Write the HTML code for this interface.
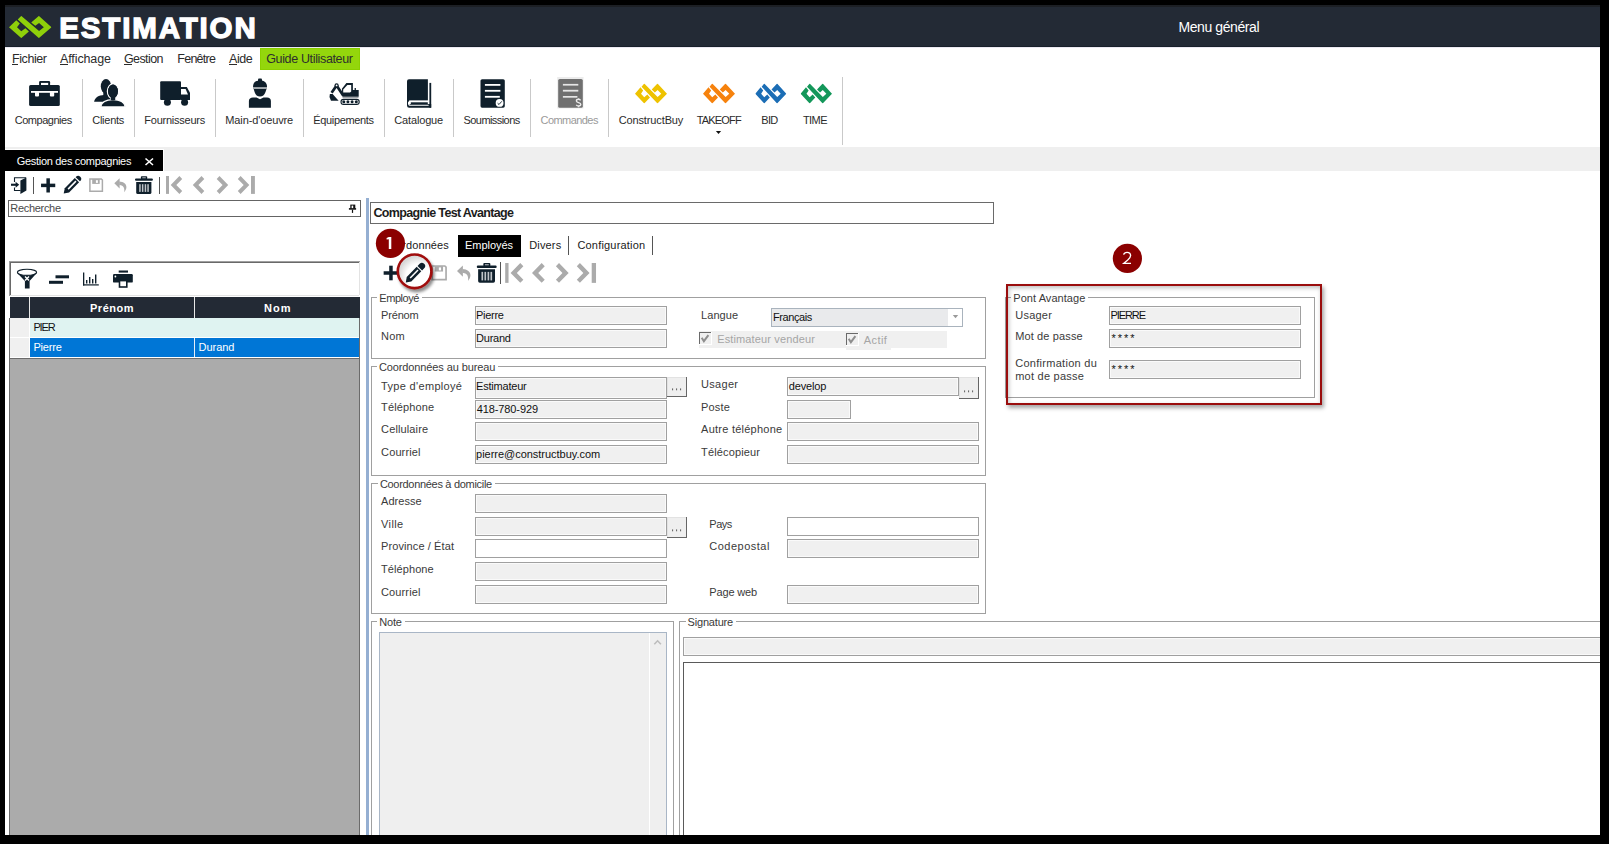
<!DOCTYPE html><html><head><meta charset="utf-8"><style>
html,body{margin:0;padding:0;}
body{width:1609px;height:844px;background:#000;position:relative;overflow:hidden;font-family:"Liberation Sans",sans-serif;}
div{position:absolute;}
.t{white-space:nowrap;}
svg{position:absolute;left:0;top:0;}
</style></head><body>
<div style="left:5px;top:5px;width:1595px;height:830px;background:#fff;"></div>
<div style="left:5px;top:5px;width:1595px;height:42px;background:#232a35;"></div>
<div style="left:5px;top:5px;width:1595px;height:2px;background:#1c1f24;"></div>
<div style="left:5px;top:46px;width:1595px;height:1px;background:#18202a;"></div>
<div style="left:5px;top:47px;width:1595px;height:1px;background:#ebe9f2;"></div>
<div class="t" style="left:59.20px;top:13.00px;font-size:29.5px;line-height:29.5px;color:#fff;font-weight:bold;letter-spacing:1.867px;-webkit-text-stroke:1.3px #fff;">ESTIMATION</div>
<div class="t" style="left:1178.50px;top:20.00px;font-size:14px;line-height:14px;color:#fff;letter-spacing:-0.418px;">Menu général</div>
<div style="left:260px;top:48px;width:100px;height:22px;background:#94d60c;box-sizing:border-box;border:1px solid #8bcf00;"></div>
<div class="t" style="left:12.00px;top:53.00px;font-size:12.5px;line-height:12.5px;color:#2b2b2b;letter-spacing:-0.417px;">Fichier</div>
<div style="left:12px;top:64px;width:6px;height:1px;background:#2b2b2b;"></div>
<div class="t" style="left:60.00px;top:53.00px;font-size:12.5px;line-height:12.5px;color:#2b2b2b;letter-spacing:-0.112px;">Affichage</div>
<div style="left:60px;top:64px;width:7.5px;height:1px;background:#2b2b2b;"></div>
<div class="t" style="left:124.00px;top:53.00px;font-size:12.5px;line-height:12.5px;color:#2b2b2b;letter-spacing:-0.600px;">Gestion</div>
<div style="left:124px;top:64px;width:7.5px;height:1px;background:#2b2b2b;"></div>
<div class="t" style="left:177.30px;top:53.00px;font-size:12.5px;line-height:12.5px;color:#2b2b2b;letter-spacing:-0.750px;">Fenêtre</div>
<div class="t" style="left:229.00px;top:53.00px;font-size:12.5px;line-height:12.5px;color:#2b2b2b;letter-spacing:-0.400px;">Aide</div>
<div style="left:229px;top:64px;width:7.5px;height:1px;background:#2b2b2b;"></div>
<div class="t" style="left:266.20px;top:53.00px;font-size:12.5px;line-height:12.5px;color:#2e2e2e;letter-spacing:-0.350px;">Guide Utilisateur</div>
<div style="left:82px;top:79px;width:1px;height:58px;background:#c9c9c9;"></div>
<div style="left:134px;top:79px;width:1px;height:58px;background:#c9c9c9;"></div>
<div style="left:215px;top:79px;width:1px;height:58px;background:#c9c9c9;"></div>
<div style="left:303px;top:79px;width:1px;height:58px;background:#c9c9c9;"></div>
<div style="left:384px;top:79px;width:1px;height:58px;background:#c9c9c9;"></div>
<div style="left:453px;top:79px;width:1px;height:58px;background:#c9c9c9;"></div>
<div style="left:530px;top:79px;width:1px;height:58px;background:#c9c9c9;"></div>
<div style="left:608px;top:79px;width:1px;height:58px;background:#c9c9c9;"></div>
<div style="left:842px;top:77px;width:1px;height:68px;background:#c9c9c9;"></div>
<div class="t" style="left:14.70px;top:115.00px;font-size:11px;line-height:11px;color:#2b2b2b;letter-spacing:-0.472px;">Compagnies</div>
<div class="t" style="left:92.20px;top:115.00px;font-size:11px;line-height:11px;color:#2b2b2b;letter-spacing:-0.250px;">Clients</div>
<div class="t" style="left:144.30px;top:115.00px;font-size:11px;line-height:11px;color:#2b2b2b;letter-spacing:-0.245px;">Fournisseurs</div>
<div class="t" style="left:225.30px;top:115.00px;font-size:11px;line-height:11px;color:#2b2b2b;letter-spacing:-0.121px;">Main-d'oeuvre</div>
<div class="t" style="left:313.20px;top:115.00px;font-size:11px;line-height:11px;color:#2b2b2b;letter-spacing:-0.330px;">Équipements</div>
<div class="t" style="left:394.30px;top:115.00px;font-size:11px;line-height:11px;color:#2b2b2b;letter-spacing:-0.156px;">Catalogue</div>
<div class="t" style="left:463.50px;top:115.00px;font-size:11px;line-height:11px;color:#2b2b2b;letter-spacing:-0.565px;">Soumissions</div>
<div class="t" style="left:540.50px;top:115.00px;font-size:11px;line-height:11px;color:#9a9a9a;letter-spacing:-0.556px;">Commandes</div>
<div class="t" style="left:618.70px;top:115.00px;font-size:11px;line-height:11px;color:#2b2b2b;letter-spacing:-0.123px;">ConstructBuy</div>
<div class="t" style="left:696.80px;top:115.00px;font-size:11px;line-height:11px;color:#2b2b2b;letter-spacing:-0.850px;">TAKEOFF</div>
<div class="t" style="left:761.30px;top:115.00px;font-size:11px;line-height:11px;color:#2b2b2b;letter-spacing:-0.675px;">BID</div>
<div class="t" style="left:803.00px;top:115.00px;font-size:11px;line-height:11px;color:#2b2b2b;letter-spacing:-0.600px;">TIME</div>
<div style="left:5px;top:147px;width:1595px;height:24px;background:#efefef;"></div>
<div style="left:5px;top:149px;width:159px;height:22px;background:#fff;"></div>
<div style="left:5px;top:150px;width:158px;height:21px;background:#000;"></div>
<div class="t" style="left:16.80px;top:156.00px;font-size:11px;line-height:11px;color:#fff;letter-spacing:-0.307px;">Gestion des compagnies</div>
<div style="left:33px;top:177px;width:1px;height:17px;background:#555;"></div>
<div style="left:159px;top:177px;width:1px;height:17px;background:#555;"></div>
<div style="left:8px;top:200px;width:353px;height:17px;box-sizing:border-box;border:1px solid #646464;background:#fff;"></div>
<div class="t" style="left:10.30px;top:203.00px;font-size:11px;line-height:11px;color:#4a4a4a;letter-spacing:-0.312px;">Recherche</div>
<div style="left:9px;top:261px;width:351px;height:35px;background:#fff;border-top:1px solid #a0a0a0;border-left:1px solid #a0a0a0;box-sizing:border-box;"></div>
<div style="left:10px;top:262px;width:349px;height:1px;background:#696969;"></div>
<div style="left:10px;top:262px;width:1px;height:33px;background:#696969;"></div>
<div style="left:358.5px;top:262px;width:1px;height:33px;background:#e3e3e3;"></div>
<div style="left:10px;top:295px;width:349px;height:1px;background:#e3e3e3;"></div>
<div style="left:10px;top:297px;width:350px;height:21px;background:#232a35;"></div>
<div style="left:29px;top:297px;width:1px;height:21px;background:#e8e8e8;"></div>
<div style="left:194px;top:297px;width:1px;height:21px;background:#e8e8e8;"></div>
<div class="t" style="left:90.00px;top:303.00px;font-size:11px;line-height:11px;color:#fff;font-weight:bold;letter-spacing:0.530px;">Prénom</div>
<div class="t" style="left:264.00px;top:303.00px;font-size:11px;line-height:11px;color:#fff;font-weight:bold;letter-spacing:1.075px;">Nom</div>
<div style="left:10px;top:318px;width:19px;height:39px;background:#f0f0f0;"></div>
<div style="left:10px;top:337px;width:19px;height:1px;background:#fff;"></div>
<div style="left:30px;top:318px;width:329px;height:19px;background:#dff3f1;"></div>
<div style="left:30px;top:338px;width:329px;height:19px;background:#0076d6;"></div>
<div style="left:194px;top:338px;width:1px;height:19px;background:#e6eef8;"></div>
<div style="left:30px;top:357px;width:329px;height:1px;background:#fff;"></div>
<div class="t" style="left:33.40px;top:322.00px;font-size:11px;line-height:11px;color:#111;letter-spacing:-1.117px;">PIER</div>
<div class="t" style="left:33.40px;top:342.00px;font-size:11px;line-height:11px;color:#fff;letter-spacing:-0.190px;">Pierre</div>
<div class="t" style="left:198.50px;top:342.00px;font-size:11px;line-height:11px;color:#fff;letter-spacing:-0.020px;">Durand</div>
<div style="left:10px;top:358px;width:350px;height:477px;background:#ababab;"></div>
<div style="left:9px;top:318px;width:1px;height:517px;background:#6b6b6b;"></div>
<div style="left:359px;top:318px;width:1px;height:517px;background:#6b6b6b;"></div>
<div style="left:10px;top:358px;width:349px;height:1px;background:#6b6b6b;"></div>
<div style="left:366px;top:198px;width:3px;height:637px;background:#95afd2;"></div>
<div style="left:370px;top:202px;width:624px;height:22px;box-sizing:border-box;border:1px solid #6a6a6a;background:#fff;"></div>
<div class="t" style="left:373.40px;top:207.00px;font-size:12.5px;line-height:12.5px;color:#1c1c1c;font-weight:bold;letter-spacing:-0.659px;">Compagnie Test Avantage</div>
<div class="t" style="left:381.80px;top:240.00px;font-size:11px;line-height:11px;color:#1a1a1a;letter-spacing:0.095px;">Coordonnées</div>
<div style="left:458px;top:235px;width:63px;height:22px;background:#000;"></div>
<div class="t" style="left:465.00px;top:240.00px;font-size:11px;line-height:11px;color:#fff;letter-spacing:-0.029px;">Employés</div>
<div class="t" style="left:529.20px;top:240.00px;font-size:11px;line-height:11px;color:#1a1a1a;letter-spacing:0.170px;">Divers</div>
<div style="left:568px;top:236px;width:1px;height:18.6px;background:#555;"></div>
<div class="t" style="left:577.40px;top:240.00px;font-size:11px;line-height:11px;color:#1a1a1a;letter-spacing:0.196px;">Configuration</div>
<div style="left:652px;top:236px;width:1px;height:18.6px;background:#555;"></div>
<div style="left:500px;top:262px;width:1px;height:22px;background:#555;"></div>
<div style="left:371px;top:297px;width:1px;height:62px;background:#a0a0a0;"></div>
<div style="left:985px;top:297px;width:1px;height:62px;background:#a0a0a0;"></div>
<div style="left:371px;top:358px;width:615px;height:1px;background:#a0a0a0;"></div>
<div style="left:371px;top:297px;width:6.300000000000011px;height:1px;background:#a0a0a0;"></div>
<div style="left:422.40000000000003px;top:297px;width:563.5999999999999px;height:1px;background:#a0a0a0;"></div>
<div class="t" style="left:379.30px;top:293.00px;font-size:11px;line-height:11px;color:#3a3a3a;letter-spacing:-0.450px;">Employé</div>
<div class="t" style="left:381.10px;top:310.00px;font-size:11px;line-height:11px;color:#3a3a3a;letter-spacing:-0.180px;">Prénom</div>
<div class="t" style="left:381.10px;top:331.00px;font-size:11px;line-height:11px;color:#3a3a3a;letter-spacing:0.125px;">Nom</div>
<div style="left:475px;top:306px;width:192px;height:19px;box-sizing:border-box;border:1px solid #a0a0a0;background:#f0f0f0;box-shadow:inset 0 0 0 1px #fafafa;"></div>
<div class="t" style="left:476.10px;top:310.00px;font-size:11px;line-height:11px;color:#101010;letter-spacing:-0.310px;">Pierre</div>
<div style="left:475px;top:329px;width:192px;height:19px;box-sizing:border-box;border:1px solid #a0a0a0;background:#f0f0f0;box-shadow:inset 0 0 0 1px #fafafa;"></div>
<div class="t" style="left:476.10px;top:333.00px;font-size:11px;line-height:11px;color:#101010;letter-spacing:-0.240px;">Durand</div>
<div class="t" style="left:701.10px;top:310.00px;font-size:11px;line-height:11px;color:#3a3a3a;letter-spacing:0.040px;">Langue</div>
<div style="left:771px;top:308px;width:192px;height:19px;box-sizing:border-box;border:1px solid #a9b3bd;background:#e9eaec;"></div>
<div style="left:948px;top:309px;width:14px;height:17px;background:#fff;"></div>
<div class="t" style="left:773.00px;top:312.00px;font-size:11px;line-height:11px;color:#101010;letter-spacing:-0.414px;">Français</div>
<div style="left:699px;top:331px;width:248px;height:17px;background:#f0f0f0;"></div>
<div style="left:846px;top:348px;width:45px;height:1.5px;background:#f0f0f0;"></div>
<div style="left:699px;top:332px;width:12.5px;height:12.5px;background:#fff;"></div>
<div style="left:699px;top:332px;width:11.5px;height:11.5px;background:#f0f0f0;box-sizing:border-box;border-top:1.5px solid #6a6a6a;border-left:1.5px solid #6a6a6a;"></div>
<div class="t" style="left:717.20px;top:334.00px;font-size:11px;line-height:11px;color:#a5a5a5;letter-spacing:0.135px;">Estimateur vendeur</div>
<div style="left:846px;top:333px;width:12.5px;height:12.5px;background:#fff;"></div>
<div style="left:846px;top:333px;width:11.5px;height:11.5px;background:#f0f0f0;box-sizing:border-box;border-top:1.5px solid #6a6a6a;border-left:1.5px solid #6a6a6a;"></div>
<div class="t" style="left:863.70px;top:335.00px;font-size:11px;line-height:11px;color:#a5a5a5;letter-spacing:0.438px;">Actif</div>
<div style="left:371px;top:366px;width:1px;height:110px;background:#a0a0a0;"></div>
<div style="left:985px;top:366px;width:1px;height:110px;background:#a0a0a0;"></div>
<div style="left:371px;top:475px;width:615px;height:1px;background:#a0a0a0;"></div>
<div style="left:371px;top:366px;width:6px;height:1px;background:#a0a0a0;"></div>
<div style="left:498.3px;top:366px;width:487.7px;height:1px;background:#a0a0a0;"></div>
<div class="t" style="left:379.00px;top:362.00px;font-size:11px;line-height:11px;color:#3a3a3a;letter-spacing:-0.118px;">Coordonnées au bureau</div>
<div class="t" style="left:381.10px;top:381.00px;font-size:11px;line-height:11px;color:#3a3a3a;letter-spacing:0.323px;">Type d'employé</div>
<div style="left:475px;top:377px;width:192px;height:22px;box-sizing:border-box;border:1px solid #a0a0a0;background:#f0f0f0;box-shadow:inset 0 0 0 1px #fafafa;"></div>
<div class="t" style="left:381.10px;top:402.00px;font-size:11px;line-height:11px;color:#3a3a3a;letter-spacing:0.125px;">Téléphone</div>
<div style="left:475px;top:400px;width:192px;height:19px;box-sizing:border-box;border:1px solid #a0a0a0;background:#f0f0f0;box-shadow:inset 0 0 0 1px #fafafa;"></div>
<div class="t" style="left:381.10px;top:424.00px;font-size:11px;line-height:11px;color:#3a3a3a;letter-spacing:0.128px;">Cellulaire</div>
<div style="left:475px;top:422px;width:192px;height:19px;box-sizing:border-box;border:1px solid #a0a0a0;background:#f0f0f0;box-shadow:inset 0 0 0 1px #fafafa;"></div>
<div class="t" style="left:381.10px;top:447.00px;font-size:11px;line-height:11px;color:#3a3a3a;letter-spacing:0.114px;">Courriel</div>
<div style="left:475px;top:445px;width:192px;height:19px;box-sizing:border-box;border:1px solid #a0a0a0;background:#f0f0f0;box-shadow:inset 0 0 0 1px #fafafa;"></div>
<div style="left:667px;top:377px;width:20px;height:20px;background:#efefef;box-sizing:border-box;border-right:1.4px solid #666;border-bottom:1.4px solid #666;"></div>
<div style="left:667px;top:377px;width:18.6px;height:1px;background:#e2e2e2;"></div>
<div style="left:667px;top:377px;width:1px;height:18.6px;background:#e2e2e2;"></div>
<div class="t" style="left:476.10px;top:381.00px;font-size:11px;line-height:11px;color:#101010;letter-spacing:-0.217px;">Estimateur</div>
<div class="t" style="left:476.70px;top:404.00px;font-size:11px;line-height:11px;color:#101010;letter-spacing:-0.100px;">418-780-929</div>
<div class="t" style="left:476.10px;top:449.00px;font-size:11px;line-height:11px;color:#101010;letter-spacing:-0.027px;">pierre@constructbuy.com</div>
<div class="t" style="left:701.10px;top:379.00px;font-size:11px;line-height:11px;color:#3a3a3a;letter-spacing:0.290px;">Usager</div>
<div class="t" style="left:701.10px;top:402.00px;font-size:11px;line-height:11px;color:#3a3a3a;letter-spacing:0.163px;">Poste</div>
<div class="t" style="left:701.10px;top:424.00px;font-size:11px;line-height:11px;color:#3a3a3a;letter-spacing:0.239px;">Autre téléphone</div>
<div class="t" style="left:701.10px;top:447.00px;font-size:11px;line-height:11px;color:#3a3a3a;letter-spacing:0.140px;">Télécopieur</div>
<div style="left:787px;top:377px;width:172px;height:19px;box-sizing:border-box;border:1px solid #a0a0a0;background:#f0f0f0;box-shadow:inset 0 0 0 1px #fafafa;"></div>
<div style="left:959px;top:377px;width:20px;height:22px;background:#efefef;box-sizing:border-box;border-right:1.4px solid #666;border-bottom:1.4px solid #666;"></div>
<div style="left:959px;top:377px;width:18.6px;height:1px;background:#e2e2e2;"></div>
<div style="left:959px;top:377px;width:1px;height:20.6px;background:#e2e2e2;"></div>
<div class="t" style="left:788.70px;top:381.00px;font-size:11px;line-height:11px;color:#101010;letter-spacing:-0.142px;">develop</div>
<div style="left:787px;top:400px;width:64px;height:19px;box-sizing:border-box;border:1px solid #a0a0a0;background:#f0f0f0;box-shadow:inset 0 0 0 1px #fafafa;"></div>
<div style="left:787px;top:422px;width:192px;height:19px;box-sizing:border-box;border:1px solid #a0a0a0;background:#f0f0f0;box-shadow:inset 0 0 0 1px #fafafa;"></div>
<div style="left:787px;top:445px;width:192px;height:19px;box-sizing:border-box;border:1px solid #a0a0a0;background:#f0f0f0;box-shadow:inset 0 0 0 1px #fafafa;"></div>
<div style="left:371px;top:483px;width:1px;height:131px;background:#a0a0a0;"></div>
<div style="left:985px;top:483px;width:1px;height:131px;background:#a0a0a0;"></div>
<div style="left:371px;top:613px;width:615px;height:1px;background:#a0a0a0;"></div>
<div style="left:371px;top:483px;width:6.899999999999977px;height:1px;background:#a0a0a0;"></div>
<div style="left:495.2px;top:483px;width:490.8px;height:1px;background:#a0a0a0;"></div>
<div class="t" style="left:379.90px;top:479.00px;font-size:11px;line-height:11px;color:#3a3a3a;letter-spacing:-0.302px;">Coordonnées à domicile</div>
<div class="t" style="left:381.00px;top:496.00px;font-size:11px;line-height:11px;color:#3a3a3a;letter-spacing:0.058px;">Adresse</div>
<div style="left:475px;top:494px;width:192px;height:19px;box-sizing:border-box;border:1px solid #a0a0a0;background:#f0f0f0;box-shadow:inset 0 0 0 1px #fafafa;"></div>
<div class="t" style="left:381.00px;top:519.00px;font-size:11px;line-height:11px;color:#3a3a3a;letter-spacing:0.400px;">Ville</div>
<div style="left:475px;top:517px;width:192px;height:19px;box-sizing:border-box;border:1px solid #a0a0a0;background:#f0f0f0;box-shadow:inset 0 0 0 1px #fafafa;"></div>
<div class="t" style="left:381.00px;top:541.00px;font-size:11px;line-height:11px;color:#3a3a3a;letter-spacing:0.104px;">Province / État</div>
<div style="left:475px;top:539px;width:192px;height:19px;box-sizing:border-box;border:1px solid #a0a0a0;background:#fff;"></div>
<div class="t" style="left:381.00px;top:564.00px;font-size:11px;line-height:11px;color:#3a3a3a;letter-spacing:0.088px;">Téléphone</div>
<div style="left:475px;top:562px;width:192px;height:19px;box-sizing:border-box;border:1px solid #a0a0a0;background:#f0f0f0;box-shadow:inset 0 0 0 1px #fafafa;"></div>
<div class="t" style="left:381.00px;top:587.00px;font-size:11px;line-height:11px;color:#3a3a3a;letter-spacing:0.129px;">Courriel</div>
<div style="left:475px;top:585px;width:192px;height:19px;box-sizing:border-box;border:1px solid #a0a0a0;background:#f0f0f0;box-shadow:inset 0 0 0 1px #fafafa;"></div>
<div style="left:667px;top:517px;width:20px;height:21px;background:#efefef;box-sizing:border-box;border-right:1.4px solid #666;border-bottom:1.4px solid #666;"></div>
<div style="left:667px;top:517px;width:18.6px;height:1px;background:#e2e2e2;"></div>
<div style="left:667px;top:517px;width:1px;height:19.6px;background:#e2e2e2;"></div>
<div class="t" style="left:709.30px;top:519.00px;font-size:11px;line-height:11px;color:#3a3a3a;letter-spacing:-0.483px;">Pays</div>
<div style="left:787px;top:517px;width:192px;height:19px;box-sizing:border-box;border:1px solid #a0a0a0;background:#fff;"></div>
<div class="t" style="left:709.30px;top:541.00px;font-size:11px;line-height:11px;color:#3a3a3a;letter-spacing:0.494px;">Codepostal</div>
<div style="left:787px;top:539px;width:192px;height:19px;box-sizing:border-box;border:1px solid #a0a0a0;background:#f0f0f0;box-shadow:inset 0 0 0 1px #fafafa;"></div>
<div class="t" style="left:709.30px;top:587.00px;font-size:11px;line-height:11px;color:#3a3a3a;letter-spacing:-0.164px;">Page web</div>
<div style="left:787px;top:585px;width:192px;height:19px;box-sizing:border-box;border:1px solid #a0a0a0;background:#f0f0f0;box-shadow:inset 0 0 0 1px #fafafa;"></div>
<div style="left:371px;top:621px;width:1px;height:220px;background:#a0a0a0;"></div>
<div style="left:673px;top:621px;width:1px;height:220px;background:#a0a0a0;"></div>
<div style="left:371px;top:840px;width:303px;height:1px;background:#a0a0a0;"></div>
<div style="left:371px;top:621px;width:6.300000000000011px;height:1px;background:#a0a0a0;"></div>
<div style="left:405.0px;top:621px;width:269.0px;height:1px;background:#a0a0a0;"></div>
<div class="t" style="left:379.30px;top:617.00px;font-size:11px;line-height:11px;color:#3a3a3a;letter-spacing:-0.183px;">Note</div>
<div style="left:379px;top:632px;width:288px;height:210px;box-sizing:border-box;border:1px solid #a9b6c6;background:#efefef;"></div>
<div style="left:649px;top:633px;width:1px;height:205px;background:#fff;"></div>
<div style="left:679px;top:621px;width:1px;height:220px;background:#a0a0a0;"></div>
<div style="left:1608px;top:621px;width:1px;height:220px;background:#a0a0a0;"></div>
<div style="left:679px;top:840px;width:930px;height:1px;background:#a0a0a0;"></div>
<div style="left:679px;top:621px;width:6.600000000000023px;height:1px;background:#a0a0a0;"></div>
<div style="left:736.2px;top:621px;width:872.8px;height:1px;background:#a0a0a0;"></div>
<div class="t" style="left:687.60px;top:617.00px;font-size:11px;line-height:11px;color:#3a3a3a;letter-spacing:-0.188px;">Signature</div>
<div style="left:683px;top:637px;width:930px;height:19px;box-sizing:border-box;border:1px solid #a0a0a0;background:#f0f0f0;box-shadow:inset 0 0 0 1px #fafafa;"></div>
<div style="left:683px;top:662px;width:930px;height:200px;box-sizing:border-box;border:1px solid #5a5a5a;background:#fff;"></div>
<div style="left:1005px;top:297px;width:1px;height:101px;background:#a0a0a0;"></div>
<div style="left:1314px;top:297px;width:1px;height:101px;background:#a0a0a0;"></div>
<div style="left:1005px;top:397px;width:310px;height:1px;background:#a0a0a0;"></div>
<div style="left:1005px;top:297px;width:6.2999999999999545px;height:1px;background:#a0a0a0;"></div>
<div style="left:1088.3px;top:297px;width:226.70000000000005px;height:1px;background:#a0a0a0;"></div>
<div class="t" style="left:1013.30px;top:293.00px;font-size:11px;line-height:11px;color:#3a3a3a;letter-spacing:0.054px;">Pont Avantage</div>
<div class="t" style="left:1015.20px;top:310.00px;font-size:11px;line-height:11px;color:#3a3a3a;letter-spacing:0.250px;">Usager</div>
<div class="t" style="left:1015.20px;top:331.00px;font-size:11px;line-height:11px;color:#3a3a3a;letter-spacing:0.132px;">Mot de passe</div>
<div class="t" style="left:1015.20px;top:358.00px;font-size:11px;line-height:11px;color:#3a3a3a;letter-spacing:0.289px;">Confirmation du</div>
<div class="t" style="left:1015.20px;top:371.00px;font-size:11px;line-height:11px;color:#3a3a3a;letter-spacing:0.250px;">mot de passe</div>
<div style="left:1109px;top:306px;width:192px;height:19px;box-sizing:border-box;border:1px solid #a0a0a0;background:#f0f0f0;box-shadow:inset 0 0 0 1px #fafafa;"></div>
<div class="t" style="left:1110.40px;top:310.00px;font-size:11px;line-height:11px;color:#101010;letter-spacing:-1.070px;">PIERRE</div>
<div style="left:1109px;top:329px;width:192px;height:19px;box-sizing:border-box;border:1px solid #a0a0a0;background:#f0f0f0;box-shadow:inset 0 0 0 1px #fafafa;"></div>
<div class="t" style="left:1111.50px;top:333.00px;font-size:11px;line-height:11px;color:#101010;letter-spacing:1.967px;">****</div>
<div style="left:1109px;top:360px;width:192px;height:19px;box-sizing:border-box;border:1px solid #a0a0a0;background:#f0f0f0;box-shadow:inset 0 0 0 1px #fafafa;"></div>
<div class="t" style="left:1111.50px;top:364.00px;font-size:11px;line-height:11px;color:#101010;letter-spacing:1.967px;">****</div>
<div style="left:1006px;top:284px;width:316px;height:121px;background:transparent;box-sizing:border-box;border:2.2px solid #9a0d0d;box-shadow:2px 3px 4px rgba(0,0,0,0.35), inset 1px 2px 4px rgba(0,0,0,0.25);"></div>
<div style="left:1600px;top:0px;width:9px;height:844px;background:#000;"></div>
<div style="left:0px;top:835px;width:1609px;height:9px;background:#000;"></div>
<div style="left:0px;top:0px;width:5px;height:844px;background:#000;"></div>
<div style="left:0px;top:0px;width:1609px;height:5px;background:#000;"></div>
<svg width="1609" height="844" viewBox="0 0 1609 844" style="position:absolute;left:0;top:0"><svg x="9" y="15.9" width="42.5" height="22.200000000000003" viewBox="85 110 1195 625" preserveAspectRatio="none"><polygon points="290,230 85,430 430,735 645,550 545,455 430,540 310,430 390,325" fill="#8fd00a"/><polygon points="330,210 430,110 930,535 1065,430 930,310 825,390 710,295 925,110 1280,430 925,735" fill="#8fd00a"/></svg>
<polygon points="715.9,131 721.1,131 718.5,134" fill="#111"/>
<path d="M145.5,158.5 L153,165 M153,158.5 L145.5,165" stroke="#fff" stroke-width="1.6"/>
<g transform="translate(0,0)"><path d="M14.5,182 V177.7 H26 M14.5,187.5 V190.5 H20.5" fill="none" stroke="#0f1f2b" stroke-width="1.1"/><polygon points="20.4,180.4 26.4,177.4 26.4,190.4 20.4,193.9" fill="#0f1f2b"/><rect x="11" y="183.7" width="5.5" height="2.1" fill="#0f1f2b"/><polygon points="15.6,181.8 19.2,184.75 15.6,187.7" fill="#0f1f2b"/></g>
<rect x="46.4" y="178.3" width="3.5" height="14.2" fill="#0f1f2b"/><rect x="41.05" y="183.65" width="14.2" height="3.5" fill="#0f1f2b"/>
<g transform="translate(63.7,193.6) rotate(-45.5)"><polygon points="0,0 4.6,-3.0 18.9,-3.0 18.9,3.0 4.6,3.0" fill="#0f1f2b"/><rect x="6.3" y="-0.75" width="11.2" height="1.5" fill="#fff"/><path d="M20.1,-3.0 H20.6 A3.0,3.0 0 0 1 20.6,3.0 H20.1 Z" fill="#0f1f2b"/></g>
<g transform="translate(0.0,0.0)"><path d="M89.9,178.9 H101.3 L102.4,180 V191.2 H89.9 Z" fill="none" stroke="#ababab" stroke-width="1.5"/><rect x="92.2" y="179" width="7.5" height="4.9" fill="#ababab"/><rect x="95.9" y="180.2" width="2" height="2.7" fill="#fff"/></g>
<g transform="translate(0.0,0.0)"><polygon points="114.3,183.2 119.6,178.2 119.6,188.4" fill="#ababab"/><path d="M119.2,181.5 C123.5,181.6 126.8,184 126.4,187.6 C126.2,189.6 125.2,191 124.2,192.2 C124.6,190 124.3,187.2 122.6,186 C121.6,185.3 120.5,185.1 119.2,185 Z" fill="#ababab"/></g>
<g transform="translate(0,0.0)"><rect x="140.9" y="176.2" width="6.3" height="3" rx="0.8" fill="#0f1f2b"/><rect x="142.3" y="177.3" width="3.5" height="1.2" fill="#b8bcc0"/><rect x="135" y="178.5" width="17.9" height="2.3" rx="1" fill="#0f1f2b"/><path d="M136.2,181.9 H151.4 V192.4 A1.5,1.5 0 0 1 149.9,193.9 H137.7 A1.5,1.5 0 0 1 136.2,192.4 Z" fill="#0f1f2b"/><rect x="139.2" y="184.2" width="1.5" height="7.7" fill="#c0c4c8"/><rect x="141.9" y="184.2" width="1.5" height="7.7" fill="#c0c4c8"/><rect x="144.7" y="184.2" width="1.5" height="7.7" fill="#c0c4c8"/><rect x="147.3" y="184.2" width="1.5" height="7.7" fill="#c0c4c8"/></g>
<rect x="166" y="176" width="3.00" height="17.90" fill="#ababab"/>
<polygon points="170.70,185.00 179.40,176.00 182.20,178.90 176.30,185.00 182.20,191.10 179.40,193.90" fill="#ababab"/>
<polygon points="192.80,185.00 201.50,176.00 204.30,178.90 198.40,185.00 204.30,191.10 201.50,193.90" fill="#ababab"/>
<polygon points="228.20,185.00 219.50,176.00 216.70,178.90 222.60,185.00 216.70,191.10 219.50,193.90" fill="#ababab"/>
<polygon points="249.30,185.00 240.60,176.00 237.80,178.90 243.70,185.00 237.80,191.10 240.60,193.90" fill="#ababab"/>
<rect x="251" y="176" width="3.90" height="17.90" fill="#ababab"/>
<g fill="#0f1f2b"><rect x="39.1" y="81" width="11" height="5" rx="1.2"/><rect x="29.1" y="85" width="30.7" height="20.9" rx="1.5"/></g><rect x="41" y="82.9" width="7.2" height="2.1" fill="#fff"/><rect x="31" y="91" width="27" height="1.8" fill="#fff"/><rect x="35" y="91" width="4" height="5.4" rx="1" fill="#fff"/><rect x="49.9" y="91" width="4.3" height="5.4" rx="1" fill="#fff"/>
<g fill="#0f1f2b"><ellipse cx="106" cy="86.3" rx="5.2" ry="7.2"/><rect x="103.3" y="91" width="4.5" height="5"/><path d="M94.1,101.7 C94.8,97.5 98.8,95.2 104,95 L110,95 L111,101.7 Z"/></g><g fill="#0f1f2b" stroke="#fff" stroke-width="1.3"><ellipse cx="113" cy="91.3" rx="5.6" ry="7.4"/><path d="M100.6,107 C101.5,102 106,99.7 113,99.7 C120,99.7 124.5,102 125.4,107 Z"/></g><ellipse cx="113" cy="91.3" rx="4.95" ry="6.75" fill="#0f1f2b"/><rect x="110.8" y="97" width="4.4" height="3.2" fill="#0f1f2b"/>
<g fill="#0f1f2b"><rect x="160.2" y="81.2" width="20.8" height="18.7" rx="1"/><path d="M180.5,87 H186.8 L190,92.8 V99.9 H180.5 Z"/><circle cx="167.4" cy="102.2" r="3.5"/><circle cx="184.6" cy="102.2" r="3.5"/></g><polygon points="181,88.9 185.6,88.9 188,94.5 181,94.5" fill="#fff"/>
<g fill="#0f1f2b"><rect x="258" y="78.5" width="4" height="3.5" rx="1"/><path d="M253,87 C253,82 256,80.5 260,80.5 C264,80.5 267,82 267,87 Z"/><path d="M253.7,89 H266.5 L265.5,92 C264.5,95 262.5,96.6 260,96.6 C257.5,96.6 255.5,95 254.6,92 Z"/><path d="M248.9,107.7 V101 C248.9,98.8 250.5,97.4 253,97.4 H256.5 L260,99.2 L263.5,97.4 H267 C269.5,97.4 270.9,98.8 270.9,101 V107.7 Z"/></g><rect x="253" y="87" width="14" height="1.9" fill="#9aa0a5"/>
<g fill="#0f1f2b"><polygon points="341.9,88.8 346.4,83.1 352.9,83.1 352.9,90.1 358.7,90.1 358.7,96.8 342.4,96.8"/><rect x="354.6" y="88" width="1.3" height="2.2"/><polygon points="329.9,93.9 332.6,93.9 338.6,100.7 331,100.7 329.5,97"/></g><polygon points="343.2,89.4 347.4,85 351.2,85 351.2,91.6 350,92.6 343.2,92.6" fill="#fff"/><path d="M343.2,95.5 L336.6,85.4 L331.6,92.8" fill="none" stroke="#0f1f2b" stroke-width="2.7" stroke-linejoin="round"/><circle cx="336.6" cy="85.4" r="2.1" fill="#0f1f2b"/><circle cx="336.6" cy="85.4" r="0.9" fill="#fff"/><rect x="342.5" y="97.2" width="16" height="0.9" fill="#8a9096"/><rect x="341" y="99.4" width="18.2" height="5" rx="2.5" fill="none" stroke="#0f1f2b" stroke-width="1.1"/><g fill="#0f1f2b"><circle cx="343.8" cy="101.8" r="1.5"/><circle cx="347.9" cy="101.8" r="1.5"/><circle cx="352.1" cy="101.8" r="1.5"/><circle cx="356.3" cy="101.8" r="1.5"/></g>
<g fill="#0f1f2b"><path d="M409,79.2 H427.9 V100.4 H407 V81.2 A2,2 0 0 1 409,79.2 Z"/><rect x="429.4" y="82.9" width="1.8" height="24.8"/><path d="M407,100 V105.5 A2.2,2.2 0 0 0 409.2,107.7 H431.2 V104 H409 V100 Z"/></g><path d="M428.6,101.2 H410.5 A2,2 0 0 0 410.5,105.2 H428.6" fill="none" stroke="#fff" stroke-width="1.1"/><rect x="410.8" y="102.3" width="17" height="1.8" fill="#0f1f2b"/>
<rect x="480.5" y="79.2" width="24.3" height="28.5" rx="1.6" fill="#0f1f2b"/><g fill="#fff"><rect x="484.9" y="84" width="15.5" height="1.8"/><rect x="484.9" y="89.9" width="15.5" height="1.8"/><rect x="484.9" y="95.9" width="14.9" height="1.8"/></g><circle cx="499.6" cy="102.9" r="3.9" fill="#fff"/><path d="M497.6,103.2 L499,104.5 L501.8,101.3" fill="none" stroke="#0f1f2b" stroke-width="0.9"/>
<rect x="557.2" y="77" width="26.3" height="31.5" fill="#ececec"/><rect x="558.2" y="78.9" width="24.6" height="28.9" rx="1.6" fill="#707070"/><g fill="#e6e6e6"><rect x="562.9" y="83.9" width="15.4" height="1.7"/><rect x="562.9" y="89.8" width="15.4" height="1.8"/><rect x="562.9" y="96" width="14.5" height="1.7"/></g><path d="M580.6,100.3 C580,99.5 579.2,99.2 578.4,99.2 C577.2,99.2 576.4,99.9 576.4,100.9 C576.4,102.8 580.8,102.3 580.8,104.3 C580.8,105.3 579.9,106 578.6,106 C577.6,106 576.8,105.6 576.2,104.9 M578.5,98.2 V99.3 M578.5,105.9 V107.2" fill="none" stroke="#ececec" stroke-width="1.35"/>
<svg x="635" y="83.5" width="32" height="20.0" viewBox="85 110 1195 625" preserveAspectRatio="none"><polygon points="290,230 85,430 430,735 645,550 545,455 430,540 310,430 390,325" fill="#eec200"/><polygon points="330,210 430,110 930,535 1065,430 930,310 825,390 710,295 925,110 1280,430 925,735" fill="#eec200"/></svg>
<svg x="703" y="83.5" width="32" height="20.0" viewBox="85 110 1195 625" preserveAspectRatio="none"><polygon points="290,230 85,430 430,735 645,550 545,455 430,540 310,430 390,325" fill="#f6820d"/><polygon points="330,210 430,110 930,535 1065,430 930,310 825,390 710,295 925,110 1280,430 925,735" fill="#f6820d"/></svg>
<svg x="755.3" y="83.5" width="31.0" height="20.0" viewBox="85 110 1195 625" preserveAspectRatio="none"><polygon points="290,230 85,430 430,735 645,550 545,455 430,540 310,430 390,325" fill="#1b6db5"/><polygon points="330,210 430,110 930,535 1065,430 930,310 825,390 710,295 925,110 1280,430 925,735" fill="#1b6db5"/></svg>
<svg x="800.6" y="83.5" width="31.399999999999977" height="20.0" viewBox="85 110 1195 625" preserveAspectRatio="none"><polygon points="290,230 85,430 430,735 645,550 545,455 430,540 310,430 390,325" fill="#14975a"/><polygon points="330,210 430,110 930,535 1065,430 930,310 825,390 710,295 925,110 1280,430 925,735" fill="#14975a"/></svg>
<g fill="#111"><rect x="350.3" y="204.6" width="5" height="4"/><rect x="348.9" y="208.1" width="7.2" height="1.6"/><rect x="351.9" y="209.6" width="1.2" height="3.3"/></g><rect x="351.6" y="205.6" width="1.6" height="2.5" fill="#fff"/>
<g fill="#0f1f2b"><path d="M17,272.8 H37 L29.6,281 V288.5 H24.9 V281 Z"/></g><ellipse cx="27" cy="272.3" rx="9.6" ry="3" fill="#fff" stroke="#0f1f2b" stroke-width="1.1"/><path d="M25,276.4 L29,280.4 M29,276.4 L25,280.4" stroke="#fff" stroke-width="1.4"/>
<rect x="55.5" y="275.3" width="13.5" height="3" fill="#0f1f2b"/><rect x="49" y="280.8" width="14" height="3" fill="#0f1f2b"/>
<g fill="#0f1f2b"><rect x="83" y="272.5" width="1.3" height="13"/><rect x="83" y="284.3" width="15.8" height="1.2"/><rect x="86" y="280" width="1.4" height="3.5"/><rect x="89" y="277" width="1.4" height="6.5"/><rect x="92" y="279" width="1.4" height="4.5"/><rect x="95" y="274.5" width="1.4" height="9"/></g>
<g fill="#0f1f2b"><rect x="118.7" y="270.5" width="9.3" height="2.1"/><rect x="113" y="274.1" width="19.8" height="8.5" rx="1.2"/></g><rect x="119.5" y="280.6" width="7.3" height="6.4" fill="#fff" stroke="#0f1f2b" stroke-width="1.6"/><circle cx="115.4" cy="276.5" r="0.9" fill="#fff"/>
<rect x="389.2" y="265.7" width="3.5" height="14.6" fill="#0f1f2b"/><rect x="383.65" y="271.25" width="14.6" height="3.5" fill="#0f1f2b"/>
<g transform="translate(431.4,265.2) scale(1.11) translate(-89.2,-178.2)">
<g transform="translate(0.0,0.0)"><path d="M89.9,178.9 H101.3 L102.4,180 V191.2 H89.9 Z" fill="none" stroke="#ababab" stroke-width="1.5"/><rect x="92.2" y="179" width="7.5" height="4.9" fill="#ababab"/><rect x="95.9" y="180.2" width="2" height="2.7" fill="#fff"/></g>
</g>
<g transform="translate(457,265.4) scale(1.11) translate(-114.3,-178.2)">
<g transform="translate(0.0,0.0)"><polygon points="114.3,183.2 119.6,178.2 119.6,188.4" fill="#ababab"/><path d="M119.2,181.5 C123.5,181.6 126.8,184 126.4,187.6 C126.2,189.6 125.2,191 124.2,192.2 C124.6,190 124.3,187.2 122.6,186 C121.6,185.3 120.5,185.1 119.2,185 Z" fill="#ababab"/></g>
</g>
<g transform="translate(476.8,263) scale(1.11) translate(-135,-176.2)">
<g transform="translate(0,0.0)"><rect x="140.9" y="176.2" width="6.3" height="3" rx="0.8" fill="#0f1f2b"/><rect x="142.3" y="177.3" width="3.5" height="1.2" fill="#b8bcc0"/><rect x="135" y="178.5" width="17.9" height="2.3" rx="1" fill="#0f1f2b"/><path d="M136.2,181.9 H151.4 V192.4 A1.5,1.5 0 0 1 149.9,193.9 H137.7 A1.5,1.5 0 0 1 136.2,192.4 Z" fill="#0f1f2b"/><rect x="139.2" y="184.2" width="1.5" height="7.7" fill="#c0c4c8"/><rect x="141.9" y="184.2" width="1.5" height="7.7" fill="#c0c4c8"/><rect x="144.7" y="184.2" width="1.5" height="7.7" fill="#c0c4c8"/><rect x="147.3" y="184.2" width="1.5" height="7.7" fill="#c0c4c8"/></g>
</g>
<rect x="505.2" y="263" width="3.33" height="19.87" fill="#ababab"/>
<polygon points="510.60,272.99 520.26,263.00 523.37,266.22 516.82,272.99 523.37,279.76 520.26,282.87" fill="#ababab"/>
<polygon points="532.00,272.99 541.66,263.00 544.76,266.22 538.22,272.99 544.76,279.76 541.66,282.87" fill="#ababab"/>
<polygon points="568.66,272.99 559.01,263.00 555.90,266.22 562.45,272.99 555.90,279.76 559.01,282.87" fill="#ababab"/>
<polygon points="589.56,272.99 579.91,263.00 576.80,266.22 583.35,272.99 576.80,279.76 579.91,282.87" fill="#ababab"/>
<rect x="591.7" y="263" width="4.33" height="19.87" fill="#ababab"/>
<polygon points="952.8,315 958.2,315 955.5,318.3" fill="#9a9a9a"/>
<path d="M701.7,337.7 L703.9,341.2 L708.4,335.2" fill="none" stroke="#8e8e8e" stroke-width="2"/>
<path d="M848.7,338.7 L850.9,342.2 L855.4,336.2" fill="none" stroke="#8e8e8e" stroke-width="2"/>
<g fill="#6a6a6a"><rect x="672" y="388.4" width="1.1" height="1.9"/><rect x="676" y="388.4" width="1.1" height="1.9"/><rect x="680" y="388.4" width="1.1" height="1.9"/></g>
<g fill="#6a6a6a"><rect x="964" y="390.4" width="1.1" height="1.9"/><rect x="968" y="390.4" width="1.1" height="1.9"/><rect x="972" y="390.4" width="1.1" height="1.9"/></g>
<g fill="#6a6a6a"><rect x="672" y="529.4" width="1.1" height="1.9"/><rect x="676" y="529.4" width="1.1" height="1.9"/><rect x="680" y="529.4" width="1.1" height="1.9"/></g>
<path d="M654.3,644.3 L657.6,640.8 L660.9,644.3" fill="none" stroke="#bdbdbd" stroke-width="1.6"/>
<defs><filter id="sh" x="-30%" y="-30%" width="160%" height="160%"><feGaussianBlur in="SourceAlpha" stdDeviation="1.5"/><feOffset dx="1.5" dy="2.5"/><feComponentTransfer><feFuncA type="linear" slope="0.45"/></feComponentTransfer><feMerge><feMergeNode/><feMergeNode in="SourceGraphic"/></feMerge></filter><radialGradient id="ig" cx="0.62" cy="0.65" r="0.6"><stop offset="0.6" stop-color="#fff"/><stop offset="1" stop-color="#d8d8d8"/></radialGradient></defs>
<circle cx="414.6" cy="271.3" r="16.8" fill="url(#ig)" stroke="#a00c0c" stroke-width="2.6" filter="url(#sh)"/>
<g transform="translate(405.8,282.6) rotate(-45.8)"><polygon points="0,0 4.6,-3.2 18.9,-3.2 18.9,3.2 4.6,3.2" fill="#0f1f2b"/><rect x="6.3" y="-0.75" width="11.2" height="1.5" fill="#fff"/><path d="M20.1,-3.2 H23.1 A3.2,3.2 0 0 1 23.1,3.2 H20.1 Z" fill="#0f1f2b"/></g>
<circle cx="390.45" cy="243.4" r="14.6" fill="#8b0000"/>
<polygon points="386.6,238 388.8,236.9 391.3,236.9 391.3,249 388.8,249 388.8,239.3 386.6,239.5" fill="#fff"/>
<circle cx="1127.4" cy="258.4" r="14.6" fill="#8b0000"/>
<path d="M1123.6,254.6 C1124.2,252.8 1125.5,252.3 1127,252.3 C1129.2,252.3 1130.6,253.5 1130.6,255.5 C1130.6,257.3 1129.5,258.6 1127.5,260.3 L1123.8,263.3 H1131" fill="none" stroke="#fff" stroke-width="1.35"/></svg>
</body></html>
